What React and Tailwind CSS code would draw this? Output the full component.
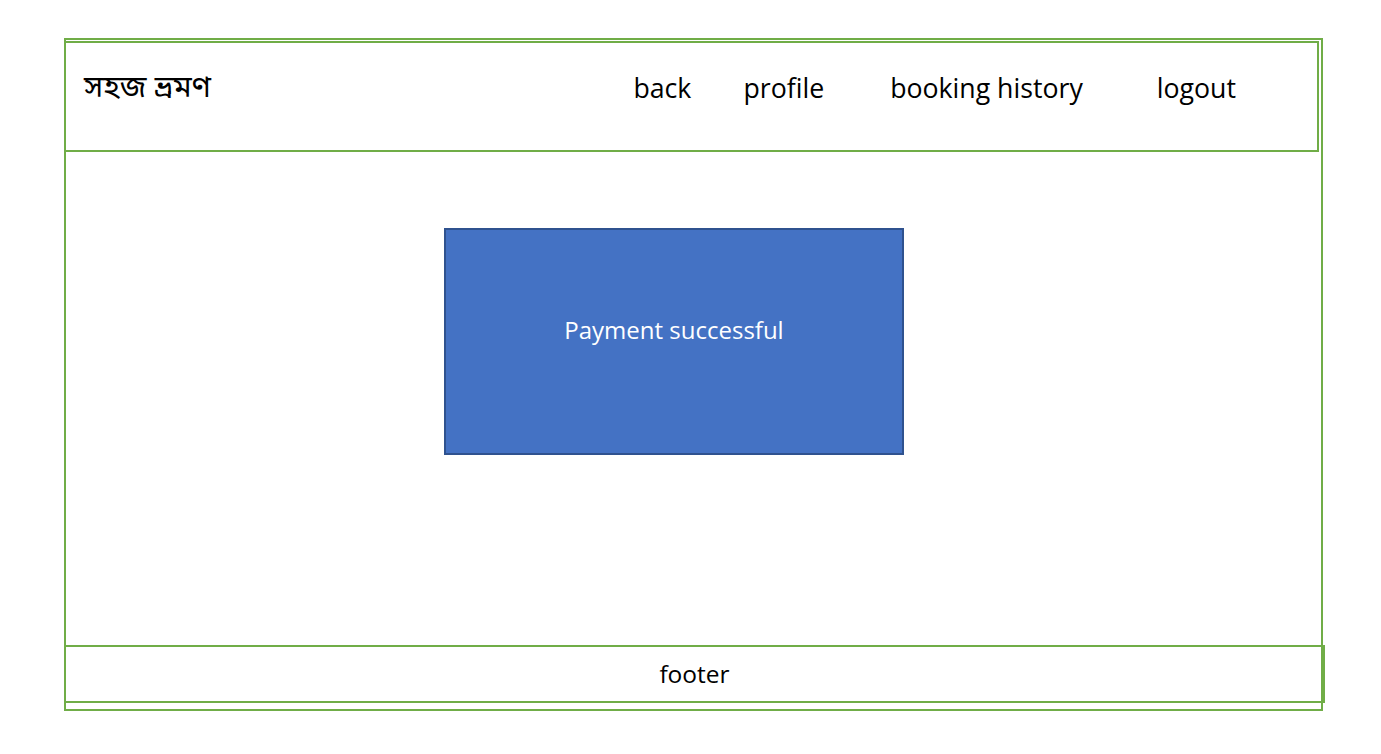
export default function App() {
  return (
    <div className="w-[1381px] h-[754px] bg-white overflow-hidden pt-[38px] pl-[64px]" style={{ fontFamily: '"Open Sans", "Noto Sans", sans-serif' }}>
      <div className="w-[1259px] h-[673px] border-2 border-[#70ad47] flex flex-col">
        {/* Header */}
        <div className="-ml-[2px] mt-[1px] w-[1255px] h-[111px] shrink-0 border-2 border-[#70ad47] flex items-center text-black">
          <div className="ml-[18px] -mt-[15px] text-[31px] leading-none" style={{ fontFamily: '"Noto Sans Bengali", "Noto Sans", sans-serif' }}>
            সহজ ভ্রমণ
          </div>
          <nav className="ml-auto flex items-center text-[26.7px] leading-none -mt-[16px]">
            <span className="mr-[52px]">back</span>
            <span className="mr-[66px]">profile</span>
            <span className="mr-[74px]">booking history</span>
            <span className="mr-[81px]">logout</span>
          </nav>
        </div>

        {/* Main */}
        <div className="flex-1 pt-[76px] pl-[378px]">
          <div className="w-[460px] h-[227px] bg-[#4472c4] border-2 border-[#2f528f] flex justify-center pt-[88px]">
            <span className="text-white text-[24px] leading-none" style={{ fontFamily: '"Open Sans", sans-serif' }}>
              Payment successful
            </span>
          </div>
        </div>

        {/* Footer */}
        <div className="-ml-[2px] w-[1261px] h-[58px] shrink-0 border-2 border-[#70ad47] flex items-center justify-center mb-[6px]">
          <span className="text-[24.5px] text-black leading-none">footer</span>
        </div>
      </div>
    </div>
  );
}
